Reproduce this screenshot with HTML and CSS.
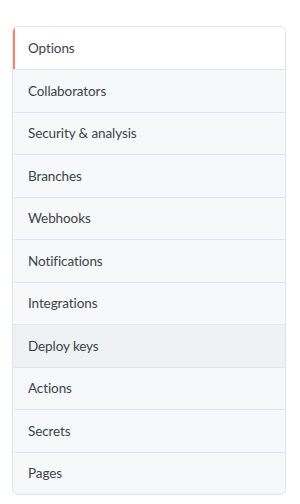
FILE: index.html
```html
<!DOCTYPE html>
<html lang="en">
<head>
    <meta charset="UTF-8">
    <title>Settings</title>
    <link rel="stylesheet" href="styles.css">
</head>
<body>
    <nav class="menu">
        <a class="menu-item selected" href="#">Options</a>
        <a class="menu-item" href="#">Collaborators</a>
        <a class="menu-item" href="#">Security &amp; analysis</a>
        <a class="menu-item" href="#">Branches</a>
        <a class="menu-item" href="#">Webhooks</a>
        <a class="menu-item" href="#">Notifications</a>
        <a class="menu-item" href="#">Integrations</a>
        <a class="menu-item hover" href="#">Deploy keys</a>
        <a class="menu-item" href="#">Actions</a>
        <a class="menu-item" href="#">Secrets</a>
        <a class="menu-item" href="#">Pages</a>
    </nav>
</body>
</html>
```

FILE: styles.css
```css
body {
    margin: 0;
    padding: 26px 14px 10px 12px;
    background: #fff;
    font-family: Lato, "Noto Sans", sans-serif;
}

.menu {
    display: flex;
    flex-direction: column;
    border: 1px solid #e1e4e8;
    border-radius: 6px;
    overflow: hidden;
    background: #f6f8fa;
}

.menu-item {
    display: flex;
    align-items: center;
    height: 41.5px;
    padding: 0 16px 0 13px;
    border-top: 1px solid #e1e4e8;
    border-left: 2px solid transparent;
    color: #3d434a;
    font-size: 13.5px;
    letter-spacing: -0.1px;
    text-decoration: none;
}

.menu-item:first-child {
    border-top: 0;
    height: 42px;
}

.menu-item.selected {
    background: #fff;
    border-left-color: #f9826c;
}

.menu-item.hover {
    background: #eff2f5;
}
```
